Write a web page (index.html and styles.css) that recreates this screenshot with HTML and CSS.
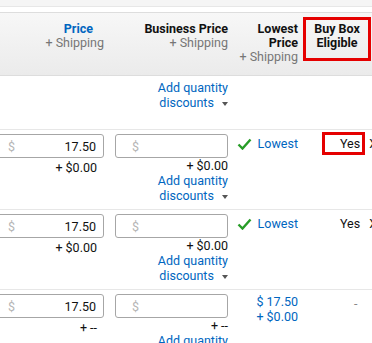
FILE: index.html
```html
<!DOCTYPE html>
<html>
<head>
  <title>Pricing</title>
  <link rel="stylesheet" href="styles.css">
</head>
<body>
  <div class="topbar"></div>
  <div class="strip"></div>

  <div class="grid head">
    <div class="c1">
      <div class="price-title">Price</div>
      <div class="sub">+ Shipping</div>
    </div>
    <div class="c2">
      <div>Business Price</div>
      <div class="sub">+ Shipping</div>
    </div>
    <div class="c3">
      <div>Lowest</div>
      <div>Price</div>
      <div class="sub">+ Shipping</div>
    </div>
    <div class="c4">
      <div class="mark head-mark">Buy Box<br>Eligible</div>
    </div>
  </div>

  <div class="grid row first">
    <div class="c1"></div>
    <div class="c2">
      <a class="link">Add quantity<br>discounts <span class="caret"></span></a>
    </div>
    <div class="c3"></div>
    <div class="c4"></div>
  </div>

  <div class="grid row">
    <div class="c1">
      <div class="box box-left"><span class="dollar">$</span><span class="val">17.50</span></div>
      <div class="ship">+ $0.00</div>
    </div>
    <div class="c2">
      <div class="box"><span class="dollar">$</span></div>
      <div>+ $0.00</div>
      <a class="link">Add quantity<br>discounts <span class="caret"></span></a>
    </div>
    <div class="c3">
      <span class="lowest"><svg class="check" width="15" height="12" viewBox="0 0 15 12"><polyline points="1.5,6.5 5.5,10.5 13.5,1.5" fill="none" stroke="#279c27" stroke-width="2.4"/></svg>Lowest</span>
    </div>
    <div class="c4">
      <div class="yes-wrap"><span class="mark yes">Yes</span><span class="x">X</span></div>
    </div>
  </div>

  <div class="grid row">
    <div class="c1">
      <div class="box box-left"><span class="dollar">$</span><span class="val">17.50</span></div>
      <div class="ship">+ $0.00</div>
    </div>
    <div class="c2">
      <div class="box"><span class="dollar">$</span></div>
      <div>+ $0.00</div>
      <a class="link">Add quantity<br>discounts <span class="caret"></span></a>
    </div>
    <div class="c3">
      <span class="lowest"><svg class="check" width="15" height="12" viewBox="0 0 15 12"><polyline points="1.5,6.5 5.5,10.5 13.5,1.5" fill="none" stroke="#279c27" stroke-width="2.4"/></svg>Lowest</span>
    </div>
    <div class="c4">
      <div class="yes-wrap"><span class="yes plain">Yes</span><span class="x">X</span></div>
    </div>
  </div>

  <div class="grid row">
    <div class="c1">
      <div class="box box-left"><span class="dollar">$</span><span class="val">17.50</span></div>
      <div class="ship">+ --</div>
    </div>
    <div class="c2">
      <div class="box"><span class="dollar">$</span></div>
      <div>+ --</div>
      <a class="link">Add quantity<br>discounts <span class="caret"></span></a>
    </div>
    <div class="c3">
      <div class="link">$ 17.50</div>
      <div class="link">+ $0.00</div>
    </div>
    <div class="c4">
      <div class="dash">-</div>
    </div>
  </div>
</body>
</html>
```

FILE: styles.css
```css
body {
  margin: 0;
  width: 372px;
  height: 343px;
  overflow: hidden;
  font-family: Roboto, "Liberation Sans", sans-serif;
  font-size: 12.5px;
  line-height: 15px;
  color: #111;
  background: #fff;
}

.topbar {
  height: 6px;
  background: #f5f5f5;
  border-bottom: 1px solid #e7e7e7;
}

.strip {
  height: 5px;
  border-bottom: 1px solid #dddddd;
}

.grid {
  display: grid;
  grid-template-columns: 104px 124px 74px 70px;
}

.c1, .c2 {
  text-align: right;
}

.c3 {
  text-align: right;
  padding-right: 4px;
}

/* header */
.head {
  height: 62px;
  background: linear-gradient(#f7f7f7, #ebebeb);
  border-bottom: 1px solid #dddddd;
  font-weight: bold;
  line-height: 14px;
}

.head .c1, .head .c2, .head .c3 {
  padding-top: 9px;
}

.price-title {
  color: #0066c0;
  padding-right: 11px;
}

.sub {
  font-weight: normal;
  color: #767676;
}

.mark {
  border: 3px solid #e50000;
}

.head-mark {
  margin: 4px 0 0 1px;
  width: 62px;
  padding: 2px 0 8px;
  text-align: center;
}

/* rows */
.row {
  height: 80px;
  box-sizing: border-box;
  border-top: 1px solid #e7e7e7;
  padding-top: 4px;
}

.row.first {
  height: 53px;
  border-top: none;
}

.link {
  color: #0066c0;
}

.caret {
  display: inline-block;
  width: 0;
  height: 0;
  border-left: 3px solid transparent;
  border-right: 3px solid transparent;
  border-top: 4px solid #555;
  margin-left: 5px;
  vertical-align: middle;
}

.box {
  display: flex;
  justify-content: space-between;
  align-items: center;
  box-sizing: border-box;
  height: 24px;
  width: 113px;
  margin-left: auto;
  border: 1px solid #a6a6a6;
  border-radius: 3px;
  padding: 0 7px 0 16px;
}

.box-left {
  margin-left: -9px;
}

.dollar {
  color: #b5b5b5;
}

.val {
  color: #111;
}

.ship {
  margin-top: 2px;
  padding-right: 7px;
}

.lowest {
  display: inline-flex;
  align-items: center;
  color: #0066c0;
  padding-top: 2px;
}

.check {
  margin-right: 6px;
}

.yes-wrap {
  display: flex;
  align-items: center;
  margin-left: 20px;
  margin-top: -2px;
}

.yes {
  display: block;
  flex: none;
  padding: 1px 2px 1px 15px;
}

.yes.plain {
  border: 3px solid transparent;
}

.x {
  flex: none;
  margin-left: 4px;
  color: #111;
}

.dash {
  color: #888;
  padding-left: 52px;
  padding-top: 2px;
}
```
